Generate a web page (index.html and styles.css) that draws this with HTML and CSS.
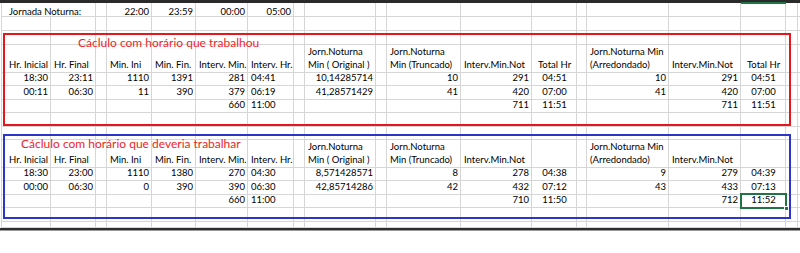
FILE: index.html
```html
<!DOCTYPE html>
<html lang="pt">
<head>
<meta charset="utf-8">
<title>Jornada Noturna</title>
<link rel="stylesheet" href="styles.css">
</head>
<body>
<div class="sheet">
  <div class="topbar"></div>
  <div class="colsel"></div>

  <div class="row h14 first"><div></div><div class="span2">Jornada Noturna:</div><div></div><div class="r">22:00</div><div class="r">23:59</div><div class="r">00:00</div><div class="r">05:00</div><div></div><div></div><div></div><div></div><div></div><div></div><div></div><div></div><div></div><div></div><div></div><div></div></div>
  <div class="row h14"><div></div><div></div><div></div><div></div><div></div><div></div><div></div><div></div><div></div><div></div><div></div><div></div><div></div><div></div><div></div><div></div><div></div><div></div><div></div><div></div></div>
  <div class="row h14"><div></div><div></div><div></div><div></div><div></div><div></div><div></div><div></div><div></div><div></div><div></div><div></div><div></div><div></div><div></div><div></div><div></div><div></div><div></div><div></div></div>
  <div class="row h27"><div></div><div>Hr. Inicial</div><div>Hr. Final</div><div></div><div>Min. Ini</div><div>Min. Fin.</div><div>Interv. Min.</div><div>Interv. Hr.</div><div></div><div class="two"><span>Jorn.Noturna<br>Min ( Original )</span></div><div></div><div class="two"><span>Jorn.Noturna<br>Min (Truncado)</span></div><div>Interv.Min.Not</div><div class="c">Total Hr</div><div></div><div class="two"><span>Jorn.Noturna Min<br>(Arredondado)</span></div><div>Interv.Min.Not</div><div class="c">Total Hr</div><div></div><div></div></div>
  <div class="row h14"><div></div><div class="r">18:30</div><div class="r">23:11</div><div></div><div class="r">1110</div><div class="r">1391</div><div class="r">281</div><div>04:41</div><div></div><div class="r">10,14285714</div><div></div><div class="r">10</div><div class="r">291</div><div class="c">04:51</div><div></div><div class="r">10</div><div class="r">291</div><div class="c">04:51</div><div></div><div></div></div>
  <div class="row h13"><div></div><div class="r">00:11</div><div class="r">06:30</div><div></div><div class="r">11</div><div class="r">390</div><div class="r">379</div><div>06:19</div><div></div><div class="r">41,28571429</div><div></div><div class="r">41</div><div class="r">420</div><div class="c">07:00</div><div></div><div class="r">41</div><div class="r">420</div><div class="c">07:00</div><div></div><div></div></div>
  <div class="row h14"><div></div><div></div><div></div><div></div><div></div><div></div><div class="r">660</div><div>11:00</div><div></div><div></div><div></div><div></div><div class="r">711</div><div class="c">11:51</div><div></div><div></div><div class="r">711</div><div class="c">11:51</div><div></div><div></div></div>
  <div class="row h14"><div></div><div></div><div></div><div></div><div></div><div></div><div></div><div></div><div></div><div></div><div></div><div></div><div></div><div></div><div></div><div></div><div></div><div></div><div></div><div></div></div>
  <div class="row h13"><div></div><div></div><div></div><div></div><div></div><div></div><div></div><div></div><div></div><div></div><div></div><div></div><div></div><div></div><div></div><div></div><div></div><div></div><div></div><div></div></div>
  <div class="row h27"><div></div><div>Hr. Inicial</div><div>Hr. Final</div><div></div><div>Min. Ini</div><div>Min. Fin.</div><div>Interv. Min.</div><div>Interv. Hr.</div><div></div><div class="two"><span>Jorn.Noturna<br>Min ( Original )</span></div><div></div><div class="two"><span>Jorn.Noturna<br>Min (Truncado)</span></div><div>Interv.Min.Not</div><div></div><div></div><div class="two"><span>Jorn.Noturna Min<br>(Arredondado)</span></div><div>Interv.Min.Not</div><div></div><div></div><div></div></div>
  <div class="row h14"><div></div><div class="r">18:30</div><div class="r">23:00</div><div></div><div class="r">1110</div><div class="r">1380</div><div class="r">270</div><div>04:30</div><div></div><div class="r">8,571428571</div><div></div><div class="r">8</div><div class="r">278</div><div class="c">04:38</div><div></div><div class="r">9</div><div class="r">279</div><div class="c">04:39</div><div></div><div></div></div>
  <div class="row h13"><div></div><div class="r">00:00</div><div class="r">06:30</div><div></div><div class="r">0</div><div class="r">390</div><div class="r">390</div><div>06:30</div><div></div><div class="r">42,85714286</div><div></div><div class="r">42</div><div class="r">432</div><div class="c">07:12</div><div></div><div class="r">43</div><div class="r">433</div><div class="c">07:13</div><div></div><div></div></div>
  <div class="row h14"><div></div><div></div><div></div><div></div><div></div><div></div><div class="r">660</div><div>11:00</div><div></div><div></div><div></div><div></div><div class="r">710</div><div class="c">11:50</div><div></div><div></div><div class="r">712</div><div class="c">11:52</div><div></div><div></div></div>
  <div class="row h14"><div></div><div></div><div></div><div></div><div></div><div></div><div></div><div></div><div></div><div></div><div></div><div></div><div></div><div></div><div></div><div></div><div></div><div></div><div></div><div></div></div>
  <div class="row h6"><div></div><div></div><div></div><div></div><div></div><div></div><div></div><div></div><div></div><div></div><div></div><div></div><div></div><div></div><div></div><div></div><div></div><div></div><div></div><div></div></div>
  <div class="bottomline"></div>

  <div class="box box-red"></div>
  <div class="box box-blue"></div>
  <div class="title title-1">Cáclulo com horário que trabalhou</div>
  <div class="title title-2">Cáclulo com horário que deveria trabalhar</div>
  <div class="selection"><span class="handle"></span></div>
</div>
</body>
</html>
```

FILE: styles.css
```css
* { box-sizing: border-box; margin: 0; padding: 0; }
html, body { width: 800px; height: 253px; background: #fff; overflow: hidden; }
body { font-family: Lato, "Liberation Sans", sans-serif; font-size: 9.5px; color: #000; }

.sheet { position: relative; width: 800px; height: 253px; }

.topbar { height: 3px; background: #2a2a2a; }
.colsel { position: absolute; left: 741px; top: 2px; width: 45px; height: 2px; background: #217346; }

.row {
  display: grid;
  grid-template-columns: 6px 45px 45px 11px 45px 44px 52px 46px 11px 71px 11px 74px 71px 45px 10px 82px 72px 45px 12px 2px;
}
.row > div {
  border-right: 1px solid #d6d6d6;
  border-bottom: 1px solid #d6d6d6;
  display: flex;
  align-items: flex-end;
  justify-content: flex-start;
  padding: 0 2px 1px 3px;
  white-space: nowrap;
  line-height: 12px;
  min-width: 0;
}
.row > div:first-child { border-right: 0; border-left: 1px solid #d6d6d6; margin-left: 1px; }
.row > div:last-child { border-right: 0; }
.row > .span2 { grid-column: span 2; }
.row > .r { justify-content: flex-end; }
.row > .c { justify-content: center; }
.row > .two span { line-height: 13px; }

.first > div { line-height: 9px; padding-bottom: 0; }

.h6 { height: 6px; }
.h13 { height: 13px; }
.h14 { height: 14px; }
.h27 { height: 27px; }

.bottomline { height: 3px; background: #2e2e2e; border-bottom: 1px solid #9a9a9a; }

.box { position: absolute; border: 2px solid; }
.box-red { left: 3px; top: 33px; width: 788px; height: 93px; border-color: #e5161e; }
.box-blue { left: 3px; top: 134px; width: 788px; height: 85px; border-color: #2c34c9; }

.title { position: absolute; font-size: 12px; line-height: 15px; color: #f0242a; white-space: nowrap; }
.title-1 { left: 78px; top: 35px; }
.title-2 { left: 21px; top: 136px; }

.selection { position: absolute; left: 740px; top: 193px; width: 47px; height: 16px; border: 2px solid #217346; }
.handle { position: absolute; right: -4px; bottom: -4px; width: 5px; height: 5px; background: #217346; border: 1px solid #fff; }
```
